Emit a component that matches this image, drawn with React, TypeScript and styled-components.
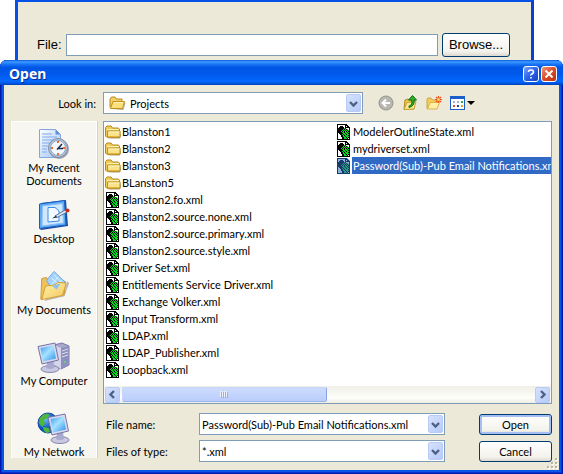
import React from 'react';
import styled, { createGlobalStyle, css } from 'styled-components';

const GlobalStyle = createGlobalStyle`
  * { box-sizing: border-box; }
  body { margin: 0; background: #fff; color: #000; font: 11px/13px Lato, "Liberation Sans", sans-serif; }
  button, input, select { font: inherit; color: inherit; margin: 0; padding: 0; }
  ul { list-style: none; margin: 0; padding: 0; }
  svg { display: block; flex: none; }
`;

const beige = '#ece9d8';
const fieldBorder = '#7f9db9';

/* ---------- parent window ---------- */

const ParentWindow = styled.section`
  margin: 0 29px 0 15px;
  padding: 31px 21px 3px 19px;
  border: solid #0550e6;
  border-width: 2px 3px 0;
  border-right-color: #0640d4;
  background: ${beige};
`;

const FileRow = styled.div`
  display: flex;
  align-items: center;
  gap: 4px;
  font: 13px/16px "Liberation Sans", sans-serif;
`;

const FileInput = styled.input`
  flex: 1;
  min-width: 0;
  height: 22px;
  padding: 0 4px;
  border: 1px solid ${fieldBorder};
  background: #fff;
`;

const PushButton = styled.button<{ $primary?: boolean; $large?: boolean }>`
  width: ${p => (p.$large ? 68 : 73)}px;
  height: ${p => (p.$large ? 24 : 21)}px;
  border: 1px solid #003c74;
  border-radius: 3px;
  background: linear-gradient(#fff, #f3f2ec 80%, #dcd8cd);
  box-shadow: ${p => (p.$primary ? 'inset 0 0 0 2px #a5bff2, inset 0 -2px #7394dc' : 'none')};
`;

/* ---------- dialog ---------- */

const Dialog = styled.section`
  padding: 0 4px 4px;
  border-radius: 7px 7px 0 0;
  background: #0855e8;
  box-shadow: inset 0 0 0 1px #0019a8, inset 0 0 0 2px #0632d2;
`;

const TitleBar = styled.header`
  display: flex;
  align-items: center;
  gap: 2px;
  height: 25px;
  margin: 0 -4px;
  padding: 2px 6px 0 9px;
  border-radius: 7px 7px 0 0;
  background: linear-gradient(#0a5be0 0, #3f9bff 8%, #1a76f8 16%, #0056e4 30%, #0058ea 55%, #0268ff 85%, #0054dc 94%, #0040b8 100%);
`;

const Title = styled.h1`
  flex: 1;
  margin: 0;
  color: #fff;
  font: bold 14px/20px "Noto Sans", sans-serif;
  text-shadow: 1px 1px #0a2a8c;
`;

const CaptionButton = styled.button<{ $close?: boolean }>`
  display: grid;
  place-items: center;
  width: 16px;
  height: 16px;
  border: 1px solid #fff;
  border-radius: 3px;
  background: ${p => (p.$close
    ? 'linear-gradient(135deg, #f0957a, #dc4a25 50%, #b93410)'
    : 'linear-gradient(135deg, #7aa3f8, #2c62e8 50%, #1644c4)')};
`;

const Body = styled.div`
  display: grid;
  grid-template-columns: 86px minmax(0, 1fr);
  column-gap: 6px;
  padding: 7px 7px 8px;
  background: ${beige};
`;

const LookInLabel = styled.label`
  padding: 5px 1px 0 0;
  text-align: right;
`;

const LookInRow = styled.div`
  display: flex;
  margin-bottom: 7px;
`;

const Combo = styled.div`
  display: flex;
  flex: 1;
  align-items: center;
  min-width: 0;
  height: 22px;
  padding: 1px;
  border: 1px solid ${fieldBorder};
  background: #fff;
`;

const comboField = css`
  flex: 1;
  min-width: 0;
  height: 18px;
  padding: 0 1px;
  border: 0;
  outline: 0;
  background: transparent;
  appearance: none;
`;
const ComboSelect = styled.select`${comboField}`;
const ComboInput = styled.input`${comboField}`;

const SquareButton = styled.button`
  display: grid;
  flex: none;
  place-items: center;
  width: 15px;
  height: 18px;
  border: 1px solid #b8cbf6;
  border-radius: 2px;
  background: linear-gradient(135deg, #d6e2fe, #b6caf8);
`;

const ScrollButton = styled(SquareButton)`
  height: 16px;
`;

const ArrowMark = styled.span`
  display: grid;
  flex: none;
  place-items: center;
  width: 15px;
  height: 18px;
  border: 1px solid #b8cbf6;
  border-radius: 2px;
  background: linear-gradient(135deg, #d6e2fe, #b6caf8);
  pointer-events: none;
`;

const ComboIcon = styled.span`
  padding: 0 3px 0 4px;
`;

const Tools = styled.div`
  display: flex;
  flex: none;
  align-items: center;
  gap: 8px;
  width: 189px;
  padding-left: 15px;
`;

const ToolButton = styled.button`
  display: flex;
  align-items: center;
  gap: 1px;
  border: 0;
  background: none;
`;

/* ---------- places bar ---------- */

const Places = styled.nav`
  grid-row: 2 / span 2;
  grid-column: 1;
  align-self: start;
  padding-top: 6px;
  border: solid #fff;
  border-width: 1px 1px 0;
  background: #f8f6f1;
  box-shadow: 1px 0 #d8d4c4;
`;

const Place = styled.button`
  display: flex;
  flex-direction: column;
  align-items: center;
  gap: 1px;
  width: 100%;
  height: 71px;
  border: 0;
  background: none;
  line-height: 13px;
  li:last-child > & { height: 46px; }
`;

const PlaceLabel = styled.span`
  max-width: 76px;
`;

/* ---------- file list ---------- */

const ListPane = styled.div`
  border: 1px solid ${fieldBorder};
  background: #fff;
`;

const FileGrid = styled.ul`
  display: grid;
  grid-template-rows: repeat(15, 17px);
  grid-auto-columns: 231px;
  grid-auto-flow: column;
  margin-bottom: 8px;
  padding: 1px 0 0 1px;
  overflow: hidden;
`;

const FileItem = styled.button`
  display: flex;
  align-items: center;
  height: 17px;
  border: 0;
  background: none;
  text-align: left;
`;

const FileName = styled.span<{ $selected?: boolean }>`
  padding: 2px 1px;
  line-height: 13px;
  white-space: nowrap;
  ${p => p.$selected && css`background: #316ac5; color: #fff;`}
`;

const ScrollBar = styled.div`
  display: flex;
  align-items: center;
  height: 17px;
  padding: 0 1px;
  background: linear-gradient(#f0efe8, #fdfdfa 70%, #eeede5);
`;

const ScrollThumb = styled.div`
  display: flex;
  align-items: center;
  justify-content: center;
  flex: 0 0 46%;
  height: 15px;
  margin: 0 auto 0 2px;
  border: 1px solid #9cb4ee;
  border-color: #c6d6fc #8aa5e6 #9cb4ee #c6d6fc;
  border-radius: 2px;
  background: linear-gradient(#cddbff, #bacdfb);
`;

/* ---------- bottom form ---------- */

const Form = styled.form`
  display: grid;
  grid-column: 2;
  grid-template-columns: 96px minmax(0, 1fr) 73px;
  align-items: center;
  row-gap: 5px;
  padding-top: 9px;
`;

const FormLabel = styled.label`
  padding-left: 3px;
`;

const FormCombo = styled(Combo)`
  margin-right: 34px;
`;

const Grip = styled.span`
  position: absolute;
  right: 1px;
  bottom: 1px;
`;

const Frame = styled.div`
  position: relative;
`;

/* ---------- icons ---------- */

const Chevron = ({ turn = 0 }: { turn?: number }) => (
  <svg width="9" height="9" viewBox="0 0 9 9" aria-hidden="true">
    <path d="M1 3l3.500 3.500L8 3" transform={`rotate(${turn} 4.500 4.500)`} fill="none" stroke="#4d6185" strokeWidth="2.400" />
  </svg>
);

const Folder = () => (
  <svg width="16" height="16" viewBox="0 0 16 16" aria-hidden="true">
    <path d="M2 14.500h13l1-2V6l-1.500 7z" fill="#8a7a50" opacity=".7" />
    <path d="M.5 12V3.500L2 2h4l1.500 2H13l1.500 1v8H1.500z" fill="#f0cb58" stroke="#b3891f" />
    <path d="M2 5.500h12" stroke="#fff3b0" />
    <path d="M2.500 7h12.500v5l-1 1.500H2.500z" fill="#fbe389" stroke="#bd922a" />
    <path d="M3.500 8h11" stroke="#fff6c8" />
    <path d="M3 12.500h11" stroke="#e2b63f" />
  </svg>
);

const OpenFolder = () => (
  <svg width="17" height="16" viewBox="0 0 17 16" aria-hidden="true">
    <path d="M3 15h11.500l2-7-1.500-1-1 7z" fill="#8a7a50" opacity=".6" />
    <path d="M1 12.500V4l1.500-2H6l1.500 2H13v3" fill="#f3d063" stroke="#b58a22" />
    <path d="M1.500 13.500L4 6.500h11.500l-2 7z" fill="#fbe078" stroke="#c28f1c" />
    <path d="M5 7.500h9" stroke="#fff6bd" />
  </svg>
);

const xmlRows = [
  'KKKKKKKKKK...',
  'KWWWWWWWKKK..',
  'KWWKKKWWKWKK.',
  'KWKKKKKWKKKKK',
  'KKKKKKKGKWWWK',
  'KKKKKKGKGKGWK',
  'KKKKKGKGKGKGK',
  'KKKKGKGKGKGKK',
  'KKKKKGGKGGKGK',
  'KWKKKKGGKGGKK',
  'KWWKKGKGGKGGK',
  'KWWWKKGKGGGKK',
  'KWWWKKGGKGGGK',
  'KWWWWKKGGKGKK',
  'KWWWWKKGGGKWK',
  'KKKKKKKKKKKKK',
];
const inks: Record<string, string> = { K: '#000', W: '#fff', G: '#06d81e' };

const XmlFile = ({ selected }: { selected?: boolean }) => (
  <svg width="16" height="16" viewBox="-1 0 16 16" shapeRendering="crispEdges" aria-hidden="true">
    {xmlRows.flatMap((row, y) =>
      row.split('').map((c, x) => c !== '.' && <rect key={`${x}-${y}`} x={x} y={y} width="1" height="1" fill={inks[c]} />))}
    {selected && <path d="M0 0h10l3 3v13H0z" fill="#316ac5" opacity=".55" />}
  </svg>
);

const Monitor = () => (
  <>
    <ellipse cx="13" cy="28" rx="9" ry="3.500" fill="#c9c9e2" stroke="#8585b0" />
    <path d="M10 21l6-1 1 7q-4 2-8 0z" fill="#a9a9cf" />
    <path d="M1 5.500L18 2l3.500 17L5 23z" fill="#d8d8ee" stroke="#7474a8" />
    <path d="M3.500 7L16.500 4.500l2.500 13L6 20.500z" fill="url(#screen)" />
  </>
);

const Gradients = () => (
  <defs>
    <linearGradient id="screen" x1="0" y1="0" x2="1" y2="1">
      <stop offset="0" stopColor="#3c9af2" /><stop offset=".45" stopColor="#a5e2ff" /><stop offset="1" stopColor="#2c8eea" />
    </linearGradient>
    <linearGradient id="page" x1="0" y1="0" x2="1" y2="1">
      <stop offset="0" stopColor="#fff" /><stop offset="1" stopColor="#9dc4f6" />
    </linearGradient>
    <linearGradient id="gold" x1="0" y1="0" x2="1" y2="1">
      <stop offset="0" stopColor="#fff2ac" /><stop offset="1" stopColor="#f3c75a" />
    </linearGradient>
    <radialGradient id="globe" cx=".35" cy=".3">
      <stop offset="0" stopColor="#6cc0ff" /><stop offset="1" stopColor="#0a4fb8" />
    </radialGradient>
  </defs>
);

const Recent = () => (
  <svg width="32" height="32" viewBox="0 0 32 32" aria-hidden="true">
    <Gradients />
    <path d="M1.500 1.500h16l5 5v23h-21z" fill="url(#page)" stroke="#83a5e4" />
    <path d="M17.500 1.500v5h5z" fill="#5f8fe0" />
    <path d="M4 6h10M4 9h15M4 12h12M4 15h8M4 18h6M4 21h5M4 24h5" stroke="#7eaaf0" />
    <circle cx="21" cy="21" r="10" fill="#7c8295" opacity=".7" />
    <circle cx="20" cy="20" r="9.500" fill="#b9c3d4" stroke="#7c8ba6" />
    <circle cx="20" cy="20" r="7.500" fill="#f1f7ff" stroke="#8ea5c6" />
    <path d="M20 13v2M20 25v2M13 20h2M25 20h2" stroke="#f06a28" strokeWidth="2" />
    <path d="M24 16l-4 4.500h5M20 20.500l-1 1" stroke="#1d2b48" strokeWidth="1.500" fill="none" />
  </svg>
);

const Desktop = () => (
  <svg width="32" height="32" viewBox="0 0 32 32" aria-hidden="true">
    <path d="M3 4L28 1 30 27 3 31 1 29z" fill="#1b4f9f" />
    <path d="M1.500 5L26.500 1.500 28 26 1.500 29.500z" fill="#5ba8f5" stroke="#1a5fc0" />
    <path d="M4.500 7L24.500 4.500l1 19.500L4 27z" fill="#cfe8ff" stroke="#8cc2f8" />
    <path d="M10 8.500h7l4 3.500v10l-11 1z" fill="#f4faff" stroke="#3c8ce6" />
    <path d="M17 17l10-6 2 2-10 5.500z" fill="#e3e8f2" stroke="#55749f" />
    <path d="M14 19.500l4-3 1 2z" fill="#1e3359" />
    <circle cx="29.500" cy="11.500" r="2" fill="#cf2c20" />
  </svg>
);

const Documents = () => (
  <svg width="32" height="32" viewBox="0 0 32 34" aria-hidden="true">
    <path d="M6 33l21-5 5-14-2-2-3 13-20 6z" fill="#777" opacity=".5" />
    <path d="M2 31L3 9l5-1 2 3 18 1-1 14z" fill="#f0c258" stroke="#c8983a" />
    <path d="M16 1.500L28 13 16 24 8 11z" fill="#a5d2f9" stroke="#6ea4de" />
    <path d="M16 5l8 8M13 8l8 8M20 8l-7 8M24 11l-7 7" stroke="#e2f3ff" />
    <path d="M3 31.500L7 17l10-1 3-3 9 1-4 13z" fill="url(#gold)" stroke="#d29e36" />
    <path d="M14 17l9-3-4 7z" fill="#8fc3ee" />
  </svg>
);

const Computer = () => (
  <svg width="34" height="32" viewBox="0 0 34 32" aria-hidden="true">
    <path d="M17 4l8-2 7 3v19l-8 4-7-4z" fill="#a8a8ce" stroke="#7676a8" />
    <path d="M17 4l7 3v21l-7-4z" fill="#d4d4ea" />
    <path d="M24 7l8-2v19l-8 4z" fill="#8f8fbd" />
    <path d="M25 10l6-2M25 13l6-2M25 16l6-2" stroke="#dedef0" />
    <circle cx="28" cy="21" r="1" fill="#58e26c" />
    <Monitor />
  </svg>
);

const Network = () => (
  <svg width="34" height="32" viewBox="0 0 34 32" aria-hidden="true">
    <circle cx="11" cy="11" r="10" fill="url(#globe)" stroke="#114b9c" />
    <path d="M3 6q4-5 9-4l-1 4-4 2 1 4-3 3-3-4zM6 15l6 1 1 4-3 1q-4-2-4-6z" fill="#4fb63b" />
    <g transform="translate(10 0)"><Monitor /></g>
  </svg>
);

const BackIcon = () => (
  <svg width="16" height="16" viewBox="0 0 16 16" aria-hidden="true">
    <circle cx="8" cy="8" r="7" fill="#b9b8b0" stroke="#96958d" />
    <path d="M12 8H5M8 4.500L4.500 8 8 11.500" fill="none" stroke="#fff" strokeWidth="2" />
  </svg>
);

const UpIcon = () => (
  <svg width="16" height="16" viewBox="0 0 16 16" aria-hidden="true">
    <path d="M2 14l1-9 3-1 1 1 6 0-1 9z" fill="#edc54e" stroke="#b58b22" />
    <path d="M2 14.500l3-7 9-1-2 7.500z" fill="#fceb94" stroke="#c7a034" />
    <path d="M7 11q4-1 2.500-6H6.500L10.500.5 14.500 5h-2.500q1 6-5 7.500z" fill="#2fae2c" stroke="#0b7014" />
  </svg>
);

const NewFolderIcon = () => (
  <svg width="16" height="16" viewBox="0 0 16 16" aria-hidden="true">
    <path d="M1 14V4l1-1h3l1.500 2H11v3" fill="#f2cd5c" stroke="#cfa53e" />
    <path d="M1.500 14l2.500-6.500h9.500L11 14z" fill="#fff0a5" stroke="#d9b24b" />
    <path d="M12.500 1v7M9 4.500h7M10 2l5 5M15 2l-5 5" stroke="#f0501c" strokeWidth="1.200" />
    <circle cx="12.500" cy="4.500" r="1.500" fill="#ffd060" />
  </svg>
);

const ViewIcon = () => (
  <svg width="16" height="15" viewBox="0 0 16 15" shapeRendering="crispEdges" aria-hidden="true">
    <path d="M0 0h15v14H0z" fill="#1d5fc8" />
    <path d="M1 3h13v10H1z" fill="#fff" />
    <path d="M3 5h2v2H3zM7 5h2v2H7z" fill="#a9b6d6" /><path d="M11 5h2v2h-2z" fill="#3aa646" />
    <path d="M3 9h2v2H3z" fill="#d9543c" /><path d="M7 9h2v2H7z" fill="#24489c" /><path d="M11 9h2v2h-2z" fill="#d1a428" />
  </svg>
);

/* ---------- content ---------- */

const folders = ['Blanston1', 'Blanston2', 'Blanston3', 'BLanston5'];
const files = [
  'Blanston2.fo.xml', 'Blanston2.source.none.xml', 'Blanston2.source.primary.xml', 'Blanston2.source.style.xml',
  'Driver Set.xml', 'Entitlements Service Driver.xml', 'Exchange Volker.xml', 'Input Transform.xml', 'LDAP.xml',
  'LDAP_Publisher.xml', 'Loopback.xml', 'ModelerOutlineState.xml', 'mydriverset.xml',
  'Password(Sub)-Pub Email Notifications.xml',
];
const selectedFile = 'Password(Sub)-Pub Email Notifications.xml';
const places = [
  { label: 'My Recent Documents', Icon: Recent },
  { label: 'Desktop', Icon: Desktop },
  { label: 'My Documents', Icon: Documents },
  { label: 'My Computer', Icon: Computer },
  { label: 'My Network', Icon: Network },
];

export default function App() {
  return (
    <>
      <GlobalStyle />
      <ParentWindow>
        <FileRow>
          <label htmlFor="path">File:</label>
          <FileInput id="path" type="text" />
          <PushButton $large type="button">Browse...</PushButton>
        </FileRow>
      </ParentWindow>
      <Dialog role="dialog" aria-labelledby="title">
        <TitleBar>
          <Title id="title">Open</Title>
          <CaptionButton type="button" aria-label="Help">
            <svg width="8" height="10" viewBox="0 0 8 10"><path d="M1.500 3q0-2 2.500-2t2.500 2q0 1-1.500 2T4 6.500M4 8v1.500" fill="none" stroke="#fff" strokeWidth="1.600" /></svg>
          </CaptionButton>
          <CaptionButton $close type="button" aria-label="Close">
            <svg width="8" height="8" viewBox="0 0 8 8"><path d="M.5.5l7 7M7.500.5l-7 7" stroke="#fff" strokeWidth="2" /></svg>
          </CaptionButton>
        </TitleBar>
        <Frame>
          <Body>
            <LookInLabel htmlFor="lookin">Look in:</LookInLabel>
            <LookInRow>
              <Combo>
                <ComboIcon><OpenFolder /></ComboIcon>
                <ComboSelect id="lookin"><option>Projects</option></ComboSelect>
                <ArrowMark><Chevron /></ArrowMark>
              </Combo>
              <Tools>
                <ToolButton type="button" aria-label="Back"><BackIcon /></ToolButton>
                <ToolButton type="button" aria-label="Up one level"><UpIcon /></ToolButton>
                <ToolButton type="button" aria-label="New folder"><NewFolderIcon /></ToolButton>
                <ToolButton type="button" aria-label="Views">
                  <ViewIcon />
                  <svg width="8" height="4" viewBox="0 0 8 4"><path d="M0 0h8L4 4z" /></svg>
                </ToolButton>
              </Tools>
            </LookInRow>
            <Places aria-label="Places">
              <ul>
                {places.map(({ label, Icon }) => (
                  <li key={label}><Place type="button"><Icon /><PlaceLabel>{label}</PlaceLabel></Place></li>
                ))}
              </ul>
            </Places>
            <ListPane>
              <FileGrid aria-label="Files">
                {folders.map(name => (
                  <li key={name}><FileItem type="button"><Folder /><FileName>{name}</FileName></FileItem></li>
                ))}
                {files.map(name => (
                  <li key={name}>
                    <FileItem type="button" aria-pressed={name === selectedFile}>
                      <XmlFile selected={name === selectedFile} />
                      <FileName $selected={name === selectedFile}>{name}</FileName>
                    </FileItem>
                  </li>
                ))}
              </FileGrid>
              <ScrollBar>
                <ScrollButton type="button" aria-label="Scroll left"><Chevron turn={90} /></ScrollButton>
                <ScrollThumb>
                  <svg width="8" height="7" viewBox="0 0 8 7" shapeRendering="crispEdges">
                    <path d="M0 0h1v6H0zM2 0h1v6H2zM4 0h1v6H4zM6 0h1v6H6z" fill="#eef4ff" />
                    <path d="M1 1h1v6H1zM3 1h1v6H3zM5 1h1v6H5zM7 1h1v6H7z" fill="#8cb0f8" />
                  </svg>
                </ScrollThumb>
                <ScrollButton type="button" aria-label="Scroll right"><Chevron turn={-90} /></ScrollButton>
              </ScrollBar>
            </ListPane>
            <Form onSubmit={e => e.preventDefault()}>
              <FormLabel htmlFor="name">File name:</FormLabel>
              <FormCombo>
                <ComboInput id="name" type="text" defaultValue={selectedFile} />
                <SquareButton type="button" aria-label="Recent names"><Chevron /></SquareButton>
              </FormCombo>
              <PushButton $primary type="submit">Open</PushButton>
              <FormLabel htmlFor="type">Files of type:</FormLabel>
              <FormCombo>
                <ComboSelect id="type"><option>*.xml</option></ComboSelect>
                <ArrowMark><Chevron /></ArrowMark>
              </FormCombo>
              <PushButton type="button">Cancel</PushButton>
            </Form>
          </Body>
          <Grip aria-hidden="true">
            <svg width="11" height="11" viewBox="0 0 11 11" shapeRendering="crispEdges">
              <path d="M9 1h2v2H9zM5 5h2v2H5zM9 5h2v2H9zM1 9h2v2H1zM5 9h2v2H5zM9 9h2v2H9z" fill="#fff" />
              <path d="M8 0h2v2H8zM4 4h2v2H4zM8 4h2v2H8zM0 8h2v2H0zM4 8h2v2H4zM8 8h2v2H8z" fill="#b8b4a3" />
            </svg>
          </Grip>
        </Frame>
      </Dialog>
    </>
  );
}
